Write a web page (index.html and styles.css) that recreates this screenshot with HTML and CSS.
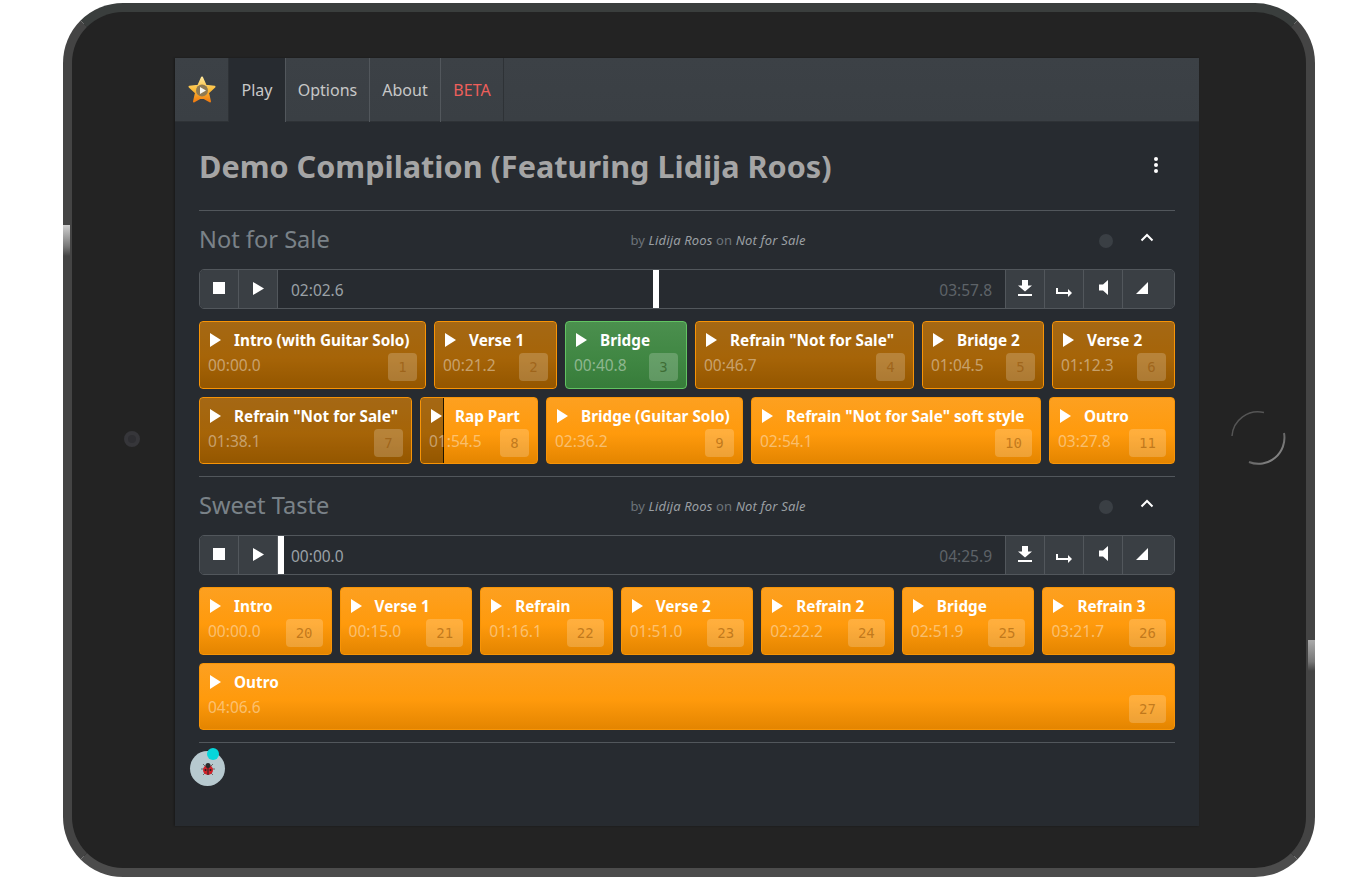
FILE: index.html
```html
<!DOCTYPE html>
<html lang="en">
<head>
  <meta charset="UTF-8" />
  <title>Demo Compilation</title>
  <link rel="stylesheet" href="styles.css">
</head>
<body>
  <svg class="sprites" width="0" height="0">
    <symbol id="i-play" viewBox="0 0 12 12" preserveAspectRatio="none"><path d="M0 0 L12 6 L0 12 Z" /></symbol>
    <symbol id="i-stop" viewBox="0 0 12 12"><rect width="12" height="12" /></symbol>
    <symbol id="i-download" viewBox="0 0 14 16"><path d="M4 0 H10 V5.500 H14 L7 11.500 L0 5.500 H4 Z M0 14 H14 V16 H0 Z" /></symbol>
    <symbol id="i-outro" viewBox="0 0 16 12"><path d="M0 2 H2 V6 H12 V3 L16 7 L12 11 V8 H0 Z" /></symbol>
    <symbol id="i-voldown" viewBox="0 0 9 15"><path d="M9 0 V15 L4 10.500 H0 V4.500 H4 Z" /></symbol>
    <symbol id="i-volup" viewBox="0 0 12 12"><path d="M12 0 V12 H0 Z" /></symbol>
    <symbol id="i-up" viewBox="0 0 14 9"><path d="M1.500 7.500 L7 2 L12.500 7.500" fill="none" stroke="#fff" stroke-width="2" /></symbol>
    <symbol id="i-more" viewBox="0 0 4 16"><circle cx="2" cy="2" r="2" /><circle cx="2" cy="8" r="2" /><circle cx="2" cy="14" r="2" /></symbol>
  </svg>

  <div class="tablet">
    <div class="glare glare-left"></div>
    <div class="glare glare-right"></div>
    <div class="camera"></div>
    <svg class="home" width="60" height="60" viewBox="0 0 60 60">
      <defs>
        <linearGradient id="homeline" x1="0" y1="0" x2="1" y2="1">
          <stop offset="0" stop-color="#333" />
          <stop offset="1" stop-color="#999" />
        </linearGradient>
      </defs>
      <path d="M4 28 A26 26 0 0 1 36 4.500" fill="none" stroke="#555" stroke-width="1.500" />
      <path d="M56 25 A26 26 0 0 1 21 54" fill="none" stroke="url(#homeline)" stroke-width="2" />
    </svg>

    <div class="screen">
      <nav class="tabs">
        <a class="tab tab-logo">
          <svg width="30" height="30" viewBox="0 0 30 30">
            <defs>
              <linearGradient id="stargold" x1="0" y1="0" x2="0" y2="1">
                <stop offset="0" stop-color="#ffe596" />
                <stop offset="0.500" stop-color="#fbbd3a" />
                <stop offset="1" stop-color="#f07c10" />
              </linearGradient>
            </defs>
            <path d="M15 2.500 L18.800 10.800 L27.500 11.800 L21 17.800 L23 26.500 L15 22 L7 26.500 L9 17.800 L2.500 11.800 L11.200 10.800 Z" fill="url(#stargold)" stroke="url(#stargold)" stroke-width="2" stroke-linejoin="round" />
            <circle cx="15" cy="15.500" r="6" fill="#8f7a52" />
            <path d="M13 12 L19 15.500 L13 19 Z" fill="#f5f5f0" />
          </svg>
        </a>
        <a class="tab tab-play active">Play</a>
        <a class="tab tab-options">Options</a>
        <a class="tab tab-about">About</a>
        <a class="tab tab-beta">BETA</a>
      </nav>

      <main class="content">
        <header class="page-head">
          <h1>Demo Compilation (Featuring Lidija Roos)</h1>
          <button class="more"><svg width="4" height="16"><use href="#i-more" /></svg></button>
        </header>

        <section class="track">
          <div class="track-head">
            <h2>Not for Sale</h2>
            <div class="byline">by <em>Lidija Roos</em> on <em>Not for Sale</em></div>
            <div class="track-tools">
              <span class="status-dot"></span>
              <button class="collapse"><svg width="14" height="9"><use href="#i-up" /></svg></button>
            </div>
          </div>
          <div class="player">
            <button class="pbtn"><svg width="12" height="12"><use href="#i-stop" /></svg></button>
            <button class="pbtn pbtn-play"><svg width="11" height="13"><use href="#i-play" /></svg></button>
            <div class="progress">
              <div class="marker" style="left: 375px"></div>
              <span class="now">02:02.6</span>
              <span class="total">03:57.8</span>
            </div>
            <button class="pbtn"><svg width="14" height="16"><use href="#i-download" /></svg></button>
            <button class="pbtn pbtn-low"><svg width="16" height="12"><use href="#i-outro" /></svg></button>
            <button class="pbtn"><svg width="9" height="15"><use href="#i-voldown" /></svg></button>
            <button class="pbtn pbtn-last"><svg width="12" height="12"><use href="#i-volup" /></svg></button>
          </div>
          <div class="cues cues-a1">
            <div class="cue"><div class="fill"></div><div class="cue-name"><svg width="11" height="14"><use href="#i-play" /></svg>Intro (with Guitar Solo)</div><div class="cue-foot"><span class="cue-time">00:00.0</span><span class="badge">1</span></div></div>
            <div class="cue"><div class="fill"></div><div class="cue-name"><svg width="11" height="14"><use href="#i-play" /></svg>Verse 1</div><div class="cue-foot"><span class="cue-time">00:21.2</span><span class="badge">2</span></div></div>
            <div class="cue cue-now"><div class="cue-name"><svg width="11" height="14"><use href="#i-play" /></svg>Bridge</div><div class="cue-foot"><span class="cue-time">00:40.8</span><span class="badge">3</span></div></div>
            <div class="cue"><div class="fill"></div><div class="cue-name"><svg width="11" height="14"><use href="#i-play" /></svg>Refrain "Not for Sale"</div><div class="cue-foot"><span class="cue-time">00:46.7</span><span class="badge">4</span></div></div>
            <div class="cue"><div class="fill"></div><div class="cue-name"><svg width="11" height="14"><use href="#i-play" /></svg>Bridge 2</div><div class="cue-foot"><span class="cue-time">01:04.5</span><span class="badge">5</span></div></div>
            <div class="cue"><div class="fill"></div><div class="cue-name"><svg width="11" height="14"><use href="#i-play" /></svg>Verse 2</div><div class="cue-foot"><span class="cue-time">01:12.3</span><span class="badge">6</span></div></div>
          </div>
          <div class="cues cues-a2">
            <div class="cue"><div class="fill"></div><div class="cue-name"><svg width="11" height="14"><use href="#i-play" /></svg>Refrain "Not for Sale"</div><div class="cue-foot"><span class="cue-time">01:38.1</span><span class="badge">7</span></div></div>
            <div class="cue"><div class="fill fill-part" style="width: 23px"></div><div class="cue-name"><svg width="11" height="14"><use href="#i-play" /></svg>Rap Part</div><div class="cue-foot"><span class="cue-time">01:54.5</span><span class="badge">8</span></div></div>
            <div class="cue"><div class="cue-name"><svg width="11" height="14"><use href="#i-play" /></svg>Bridge (Guitar Solo)</div><div class="cue-foot"><span class="cue-time">02:36.2</span><span class="badge">9</span></div></div>
            <div class="cue"><div class="cue-name"><svg width="11" height="14"><use href="#i-play" /></svg>Refrain "Not for Sale" soft style</div><div class="cue-foot"><span class="cue-time">02:54.1</span><span class="badge badge-wide">10</span></div></div>
            <div class="cue"><div class="cue-name"><svg width="11" height="14"><use href="#i-play" /></svg>Outro</div><div class="cue-foot"><span class="cue-time">03:27.8</span><span class="badge badge-wide">11</span></div></div>
          </div>
        </section>

        <section class="track">
          <div class="track-head">
            <h2>Sweet Taste</h2>
            <div class="byline">by <em>Lidija Roos</em> on <em>Not for Sale</em></div>
            <div class="track-tools">
              <span class="status-dot"></span>
              <button class="collapse"><svg width="14" height="9"><use href="#i-up" /></svg></button>
            </div>
          </div>
          <div class="player">
            <button class="pbtn"><svg width="12" height="12"><use href="#i-stop" /></svg></button>
            <button class="pbtn pbtn-play"><svg width="11" height="13"><use href="#i-play" /></svg></button>
            <div class="progress">
              <div class="marker" style="left: 0"></div>
              <span class="now">00:00.0</span>
              <span class="total">04:25.9</span>
            </div>
            <button class="pbtn"><svg width="14" height="16"><use href="#i-download" /></svg></button>
            <button class="pbtn pbtn-low"><svg width="16" height="12"><use href="#i-outro" /></svg></button>
            <button class="pbtn"><svg width="9" height="15"><use href="#i-voldown" /></svg></button>
            <button class="pbtn pbtn-last"><svg width="12" height="12"><use href="#i-volup" /></svg></button>
          </div>
          <div class="cues cues-b1">
            <div class="cue"><div class="cue-name"><svg width="11" height="14"><use href="#i-play" /></svg>Intro</div><div class="cue-foot"><span class="cue-time">00:00.0</span><span class="badge badge-wide">20</span></div></div>
            <div class="cue"><div class="cue-name"><svg width="11" height="14"><use href="#i-play" /></svg>Verse 1</div><div class="cue-foot"><span class="cue-time">00:15.0</span><span class="badge badge-wide">21</span></div></div>
            <div class="cue"><div class="cue-name"><svg width="11" height="14"><use href="#i-play" /></svg>Refrain</div><div class="cue-foot"><span class="cue-time">01:16.1</span><span class="badge badge-wide">22</span></div></div>
            <div class="cue"><div class="cue-name"><svg width="11" height="14"><use href="#i-play" /></svg>Verse 2</div><div class="cue-foot"><span class="cue-time">01:51.0</span><span class="badge badge-wide">23</span></div></div>
            <div class="cue"><div class="cue-name"><svg width="11" height="14"><use href="#i-play" /></svg>Refrain 2</div><div class="cue-foot"><span class="cue-time">02:22.2</span><span class="badge badge-wide">24</span></div></div>
            <div class="cue"><div class="cue-name"><svg width="11" height="14"><use href="#i-play" /></svg>Bridge</div><div class="cue-foot"><span class="cue-time">02:51.9</span><span class="badge badge-wide">25</span></div></div>
            <div class="cue"><div class="cue-name"><svg width="11" height="14"><use href="#i-play" /></svg>Refrain 3</div><div class="cue-foot"><span class="cue-time">03:21.7</span><span class="badge badge-wide">26</span></div></div>
          </div>
          <div class="cues cues-b2">
            <div class="cue"><div class="cue-name"><svg width="11" height="14"><use href="#i-play" /></svg>Outro</div><div class="cue-foot"><span class="cue-time">04:06.6</span><span class="badge badge-wide">27</span></div></div>
          </div>
        </section>

        <div class="bug">
          <span class="bug-dot"></span>
          <svg width="16" height="16" viewBox="0 0 16 16">
            <path d="M3 3 L6 6 M13 3 L10 6 M1 8 L4 8 M15 8 L12 8 M3 14 L5 12 M13 14 L11 12" stroke="#666" stroke-width="1" />
            <circle cx="8" cy="9" r="5" fill="#d0222a" />
            <circle cx="8" cy="4.500" r="2.500" fill="#2a2a2a" />
            <path d="M8 5 V14" stroke="#222" stroke-width="1" />
            <circle cx="5.500" cy="9" r="1" fill="#222" />
            <circle cx="10.500" cy="9" r="1" fill="#222" />
          </svg>
        </div>
      </main>
    </div>
  </div>
</body>
</html>
```
FILE: styles.css
```css
* {
  box-sizing: border-box;
}
body {
  margin: 0;
  padding: 3px 0 0 63px;
  background: #fff;
  font-family: "Noto Sans", "Open Sans", sans-serif;
  overflow: hidden;
}
.sprites {
  position: absolute;
}
button {
  font: inherit;
  background: none;
  border: none;
  padding: 0;
}

/* device */
.tablet {
  position: relative;
  width: 1252px;
  height: 874px;
  padding: 46px 0 0 103px;
  background: #232323;
  border: 9px solid #444;
  border-top-color: #3a3e3d;
  border-bottom-color: #4c4c4c;
  border-radius: 60px;
}
.glare {
  position: absolute;
  width: 7px;
  height: 31px;
  background: linear-gradient(#cfcfcf, #777 70%, #444);
}
.glare-left {
  left: -9px;
  top: 213px;
}
.glare-right {
  right: -9px;
  top: 628px;
  background: linear-gradient(#aaa, #777 70%, #444);
}
.camera {
  position: absolute;
  left: 52px;
  top: 419px;
  width: 16px;
  height: 16px;
  border-radius: 50%;
  background: #2e2e32;
  border: 4px solid #36363a;
}
.home {
  position: absolute;
  left: 1156px;
  top: 396px;
}
.screen {
  width: 1024px;
  height: 768px;
  background: #272b30;
  overflow: hidden;
  box-shadow: -1px 0 2px rgba(0,0,0,0.3);
}

/* nav */
.tabs {
  display: flex;
  height: 64px;
  background: linear-gradient(#3c4146, #3a3f44);
  border-bottom: 1px solid #2e3236;
}
.tab {
  display: flex;
  align-items: center;
  justify-content: center;
  height: 64px;
  font-size: 16px;
  color: #c8c8c8;
  border-right: 1px solid #52575c;
}
.tab-logo {
  width: 54px;
  border-right-color: #2e3236;
}
.tab-play {
  width: 57px;
}
.tab-options {
  width: 84px;
}
.tab-about {
  width: 71px;
}
.tab-beta {
  width: 63px;
  color: #ee5f5b;
  border-right-color: #2e3236;
}
.tab.active {
  background: #272b30;
}

.content {
  padding: 0 24px;
}
.page-head {
  display: flex;
  align-items: center;
  justify-content: space-between;
  height: 89px;
  padding: 0 17px 1px 0;
  border-bottom: 1px solid #52575c;
}
h1 {
  margin: 0;
  font-size: 30.6px;
  font-weight: 700;
  color: #a5a5a5;
}
.more {
  display: flex;
  fill: #fff;
  margin-bottom: 1px;
}

/* track */
.track {
  padding-bottom: 12px;
  border-bottom: 1px solid #52575c;
}
.track-head {
  display: grid;
  grid-template-columns: 352px 1fr 290px;
  align-items: center;
  height: 58px;
}
h2 {
  margin: 0 0 2px;
  font-size: 23.6px;
  font-weight: 400;
  color: #7a8288;
}
.byline {
  text-align: center;
  font-size: 13px;
  letter-spacing: 0.15px;
  color: #6c7379;
}
.byline em {
  color: #9a9fa3;
}
.track-tools {
  display: flex;
  justify-content: flex-end;
  align-items: center;
}
.status-dot {
  width: 14px;
  height: 14px;
  border-radius: 50%;
  background: #3a3f44;
  margin-top: 2px;
}
.collapse {
  display: flex;
  justify-content: center;
  width: 56px;
  margin-left: 6px;
  margin-bottom: 5px;
  padding-right: 1px;
}

/* player bar */
.player {
  display: flex;
  height: 40px;
  border: 1px solid #52575c;
  border-radius: 5px;
  overflow: hidden;
}
.pbtn {
  display: flex;
  align-items: center;
  justify-content: center;
  width: 39px;
  padding-bottom: 3px;
  fill: #fff;
  background: #3a3f44;
  border-right: 1px solid #52575c;
}
.pbtn-play {
  padding: 0 0 2px 1px;
}
.pbtn-low {
  padding: 6px 0 0;
}
.pbtn-last {
  width: 51px;
  padding-right: 14px;
  border-right: none;
}
.progress {
  position: relative;
  flex: 1;
  display: flex;
  align-items: center;
  justify-content: space-between;
  padding: 1px 13px 0 13px;
  font-size: 15.5px;
  border-left: 1px solid #52575c;
  border-right: 1px solid #52575c;
  margin-left: -1px;
}
.marker {
  position: absolute;
  top: 0;
  bottom: 0;
  width: 6px;
  background: #fff;
}
.now {
  color: #9aa1a6;
}
.total {
  color: #5e6368;
}

/* cues */
.cues {
  display: grid;
  gap: 8px;
  margin-top: 8px;
}
.player + .cues {
  margin-top: 12px;
}
.cues-a1 {
  grid-template-columns: 227fr 123fr 122fr 219fr 122fr 123fr;
}
.cues-a2 {
  grid-template-columns: 213fr 118fr 197fr 290fr 126fr;
}
.cues-b1 {
  grid-template-columns: repeat(7, 1fr);
}
.cues-b2 {
  grid-template-columns: 1fr;
}
.cue {
  position: relative;
  height: 67.5px;
  padding: 8px 8px 7px 9px;
  color: #fff;
  border: 1px solid #f89406;
  border-radius: 4px;
  background: linear-gradient(#fda020, #ff9a0c 55%, #e48500);
  overflow: hidden;
}
.fill {
  position: absolute;
  left: 0;
  top: 0;
  bottom: 0;
  width: 100%;
  background: rgba(0,0,0,0.35);
}
.fill-part {
  border-right: 1px solid #1c1400;
}
.cue-name {
  position: relative;
  display: flex;
  align-items: center;
  gap: 13px;
  padding-left: 1px;
  height: 20px;
  font-size: 15.3px;
  font-weight: 700;
  white-space: nowrap;
  fill: #fff;
}
.cue-foot {
  position: relative;
  display: flex;
  justify-content: space-between;
  align-items: flex-start;
  margin-top: 3px;
}
.cue-time {
  margin: 2px 0 0 -1px;
  font-size: 15.5px;
  line-height: 20px;
  color: rgba(255,255,255,0.42);
}
.badge {
  width: 29px;
  height: 28px;
  line-height: 28px;
  text-align: center;
  font-family: "DejaVu Sans Mono", "Liberation Mono", monospace;
  font-size: 14px;
  color: rgba(140,75,0,0.5);
  background: rgba(255,255,255,0.2);
  border-radius: 4px;
}
.badge-wide {
  width: 37px;
}
.cue-now {
  border-color: #62c462;
  background: linear-gradient(#4b8f4e, #3f8642 60%, #377c3a);
}
.cue-now .badge {
  color: rgba(30,70,10,0.55);
}

/* bug report button */
.bug {
  position: relative;
  display: flex;
  align-items: center;
  justify-content: center;
  width: 35px;
  height: 35px;
  margin: 8px 0 0 -9px;
  border-radius: 50%;
  background: #b7c9cf;
}
.bug-dot {
  position: absolute;
  top: -3px;
  right: 6px;
  width: 12px;
  height: 12px;
  border-radius: 50%;
  background: #06d6da;
}
```
